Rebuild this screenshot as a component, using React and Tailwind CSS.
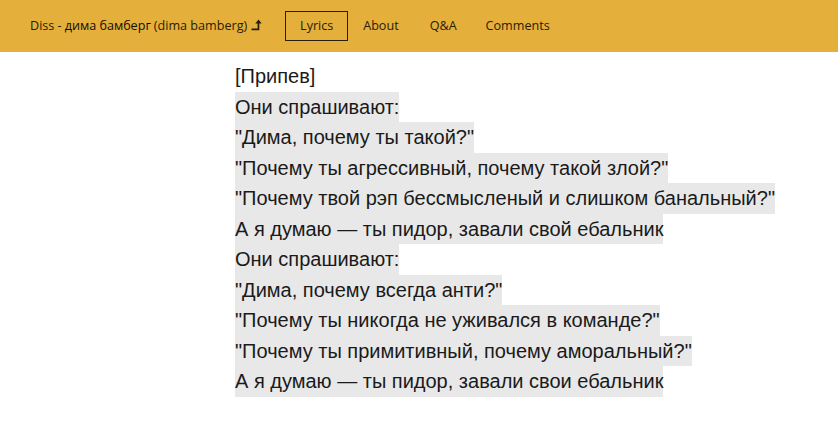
import React from "react";

const lines = [
  { t: "[Припев]", h: false },
  { t: "Они спрашивают:", h: true },
  { t: "\"Дима, почему ты такой?\"", h: true },
  { t: "\"Почему ты агрессивный, почему такой злой?\"", h: true },
  { t: "\"Почему твой рэп бессмысленый и слишком банальный?\"", h: true },
  { t: "А я думаю — ты пидор, завали свой ебальник", h: true },
  { t: "Они спрашивают:", h: true },
  { t: "\"Дима, почему всегда анти?\"", h: true },
  { t: "\"Почему ты никогда не уживался в команде?\"", h: true },
  { t: "\"Почему ты примитивный, почему аморальный?\"", h: true },
  { t: "А я думаю — ты пидор, завали свои ебальник", h: true },
];

function HookArrow() {
  return (
    <svg width="11" height="12" viewBox="0 0 11 12" className="ml-[4px] mb-[2px]">
      <path d="M7.5 0.5 L4.3 4.5 H6.6 V9.6 H0.5 V11.2 H8.3 V4.5 H10.7 Z" fill="#2a1c08" />
    </svg>
  );
}

export default function App() {
  return (
    <div className="w-[838px] h-[442px] bg-white overflow-hidden">
      <header
        className="h-[52px] bg-[#e4b03b] flex items-center pl-[30px] text-[#2a1c08] text-[12.6px]"
        style={{ fontFamily: '"Open Sans", "Noto Sans", sans-serif' }}
      >
        <div className="flex items-center">
          <span>Diss - </span>
          <span className="ml-[3px] text-[#140c02]">дима бамберг</span>
          <span className="ml-[3px]">(dima bamberg)</span>
          <HookArrow />
        </div>
        <nav className="flex items-center ml-[23px]">
          <span className="h-[30px] w-[63px] border border-[#2a1c08] flex items-center justify-center">
            Lyrics
          </span>
          <span className="ml-[15px]">About</span>
          <span className="ml-[31px]">Q&amp;A</span>
          <span className="ml-[29px]">Comments</span>
        </nav>
      </header>
      <main
        className="pl-[235px] pt-[9px] text-[20px] text-[#1a1a1a]"
        style={{ fontFamily: '"Liberation Sans", Arial, sans-serif' }}
      >
        {lines.map((l, i) => (
          <div
            key={i}
            className={
              "w-fit leading-[30.5px] h-[30.5px] whitespace-nowrap " +
              (l.h ? "bg-[#e8e8e8]" : "")
            }
          >
            {l.t}
          </div>
        ))}
      </main>
    </div>
  );
}
